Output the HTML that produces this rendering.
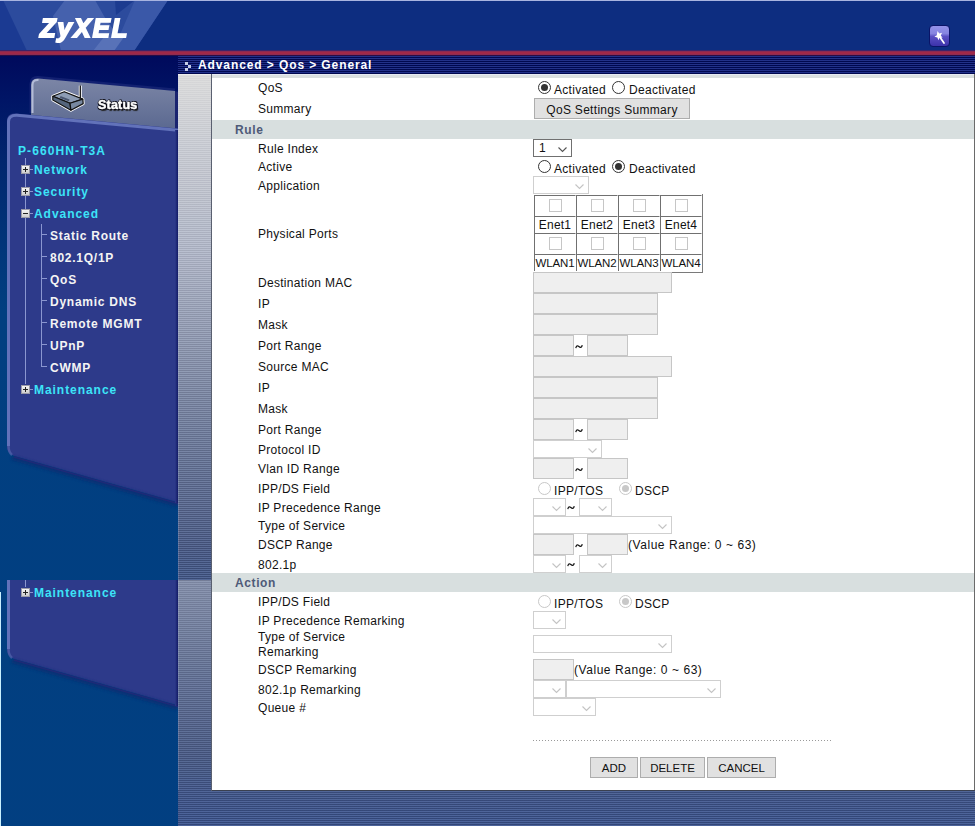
<!DOCTYPE html>
<html><head><meta charset="utf-8"><style>
*{box-sizing:content-box}
html,body{margin:0;padding:0;width:975px;height:826px;overflow:hidden;background:#023f85;font-family:"Liberation Sans",sans-serif}
.a{position:absolute}
.t{position:absolute;font-size:12px;line-height:14px;letter-spacing:0.3px;color:#111;white-space:nowrap}
.hd{position:absolute;font-size:12px;line-height:14px;letter-spacing:0.6px;color:#4e5a78;font-weight:bold;white-space:nowrap}
.mt{position:absolute;font-size:12px;line-height:14px;letter-spacing:0.6px;font-weight:bold;white-space:nowrap}
.rd{position:absolute;width:11px;height:11px;border:1px solid #333;border-radius:50%;background:#fff}
.rd i{position:absolute;left:2px;top:2px;width:7px;height:7px;border-radius:50%;background:#333}
.rd.dis{border-color:#c8c8c8}
.rd.dis i{background:#c8c8c8}
.sel{position:absolute;border:1px solid #707070;background:#fff}
.sel.dis{border-color:#cfcfcf}
.sel span{position:absolute;left:5px;top:1px;font-size:12px;line-height:14px;color:#111}
.inp{position:absolute;border:1px solid #c6c6c6;background:#efefef}
.btn{position:absolute;border:1px solid #adadad;background:#e1e1e1;text-align:center;font-size:11.5px;letter-spacing:0px;color:#111;white-space:nowrap}
.hdr{position:absolute;left:212px;width:762px;height:19px;background:#d8dfdf}
.ptab{position:absolute;left:533px;top:194px;width:168px;height:77px;border-right:1px solid #7a7a7a;border-bottom:1px solid #7a7a7a;padding:1px 0 0 1px}
.pr{display:flex}
.pc{position:relative;width:40px;border-left:1px solid #707070;border-top:1px solid #707070;border-right:1px solid #fff;border-bottom:0}
.pc.lab{font-size:12px;letter-spacing:0.2px;line-height:16px;text-align:center;color:#111;white-space:nowrap;overflow:visible}
.pc.lab.w{font-size:11.5px;letter-spacing:-0.1px}
.cb{position:absolute;left:14px;top:3px;width:11px;height:11px;border:1px solid #c6c6c6;background:#fff}
.pb{position:absolute;width:9px;height:9px;background:linear-gradient(#fafafa,#c8c8c8);box-shadow:inset 0 0 0 1px #9a9aa8}
.pb .h{position:absolute;left:2px;top:4px;width:5px;height:1px;background:#222}
.pb .v{position:absolute;left:4px;top:2px;width:1px;height:5px;background:#222}
.tl{position:absolute;width:1px;background:#8a96d0}
.th{position:absolute;height:1px;background:#8a96d0}
</style></head><body>
<!-- header -->
<div class="a" style="left:0;top:0;width:975px;height:51px;background:#0d2d80;overflow:hidden">
<svg width="975" height="51" style="position:absolute;left:0;top:0">
<polygon points="0,0 168,0 134,51 0,51" fill="#2c4b9d"/>
<polygon points="0,0 3,0 27,51 0,51" fill="#1b3a92"/>
<polygon points="65,0 95,0 104,16 128,51 61,51 53,16" fill="#4561ad"/>
<polygon points="115,0 135,0 116,15" fill="#1c3b90"/>
<polygon points="135,0 168,0 134,51 112,51 122,30" fill="#3a58a8"/>
<polygon points="93,51 114,51 124,37 104,37" fill="#5872b8"/>
<rect x="0" y="0" width="975" height="1" fill="#a8b4e0"/>
</svg>
<div class="a" style="left:40px;top:13px;font-size:25.5px;line-height:30px;font-weight:bold;font-style:italic;color:#fff;letter-spacing:2px;-webkit-text-stroke:1.9px #fff;will-change:transform">ZyXEL</div>
<div class="a" style="left:929px;top:25px;width:19px;height:20px;border:1px solid #0a1468;border-radius:4px;background:linear-gradient(#9292ea,#8684e0 38%,#5a50c4 52%,#3c32aa)">
<svg width="19" height="20" style="position:absolute;left:0;top:0"><path d="M7.5 5 L9.3 7.6 L12 6.8 L10.8 9.5 L12.6 11.8 L9.6 11.6 L8.4 14.2 L7.4 11.5 L4.4 10.8 L6.8 9.2 Z" fill="#fff"/><path d="M9.5 10.5 L14 17" stroke="#fff" stroke-width="1.7" stroke-linecap="round"/></svg>
</div>
</div>
<div class="a" style="left:0;top:50px;width:975px;height:1px;background:#3c2468"></div>
<div class="a" style="left:0;top:51px;width:975px;height:1px;background:#8a2a52"></div>
<div class="a" style="left:0;top:52px;width:975px;height:2px;background:#a02848"></div>
<div class="a" style="left:0;top:54px;width:975px;height:1px;background:#8c2c52"></div>
<div class="a" style="left:0;top:55px;width:975px;height:1px;background:#2a0c44"></div>
<!-- left frame 1 -->
<div class="a" style="left:0;top:56px;width:178px;height:524px;overflow:hidden"><div class="a" style="left:0;top:-56px;width:178px;height:826px"><div class="a" style="left:0;top:0;width:178px;height:826px;background:linear-gradient(to bottom,#000a5c 56px,#001566 100px,#01266e 160px,#01367a 250px,#013f80 310px,#023f82 826px)"></div>
<svg width="178" height="826" style="position:absolute;left:0;top:0">
<defs>
<linearGradient id="tabg" x1="0" y1="0" x2="0" y2="1"><stop offset="0" stop-color="#7c86a6"/><stop offset="1" stop-color="#5a6890"/></linearGradient>
<filter id="bl" x="-10%" y="-50%" width="120%" height="200%"><feGaussianBlur stdDeviation="1.5"/></filter>
<linearGradient id="rsh" x1="0" y1="0" x2="1" y2="0"><stop offset="0" stop-color="#2d3a8a"/><stop offset="1" stop-color="#121a66"/></linearGradient>
<linearGradient id="shd" x1="0" y1="0" x2="0" y2="1"><stop offset="0" stop-color="#023f82" stop-opacity="0"/><stop offset="1" stop-color="#0a2a70" stop-opacity="1"/></linearGradient>
</defs>
<path d="M175,90 L38,77.5 Q31,77 31,84 L31,113" fill="none" stroke="#1a2878" stroke-width="3" opacity="0.7"/>
<path d="M31,116 L31,85 Q31,78 38.5,78.5 L175,91 L175,130 Z" fill="url(#tabg)"/>
<path d="M32.5,113 L32.5,85 Q32.5,79.5 38.5,80" fill="none" stroke="#b4bcd8" stroke-width="2"/>
<path d="M175,91 L178,92 L178,130 L175,130 Z" fill="#1a2470"/>
<path d="M7,447 L7,121 Q7,112.5 16,113.5 L178,128.5 L178,502.5 L14,456 Q7,453 7,447 Z" fill="#2d3a8a"/>
<path d="M12,458 L178,505" stroke="#0c2a70" stroke-width="4" opacity="0.7" filter="url(#bl)"/><path d="M14,457 L178,503.5" stroke="#1e2a78" stroke-width="1.5"/>
<path d="M8.5,446 Q8.5,452 12,455" fill="none" stroke="#5a6cb4" stroke-width="2.5" opacity="0.6"/><path d="M8.5,446 L8.5,122 Q8.5,115 17,115.3 L178,130.3" fill="none" stroke="#6272ba" stroke-width="3"/>
<path d="M175,130 L178,130 L178,503 L175,503 Z" fill="url(#rsh)"/>
<!-- router icon -->
<g stroke-linejoin="round">
<path d="M52.8,96.3 L64.3,91.7 L82.8,99.1 L83.2,103.6 L70.9,110.2 L52.8,100 Z" fill="none" stroke="#fff" stroke-width="3"/>
<line x1="80.3" y1="85.6" x2="80.3" y2="98" stroke="#fff" stroke-width="3"/>
<path d="M52.8,96.3 L64.3,91.7 L82.8,99.1 L70,103.2 Z" fill="#8d9cb4" stroke="#111" stroke-width="1.2"/>
<path d="M52.8,96.3 L70,103.2 L70.9,110.2 L52.8,100 Z" fill="#55657c" stroke="#111" stroke-width="1.2"/>
<path d="M70,103.2 L82.8,99.1 L83.2,103.6 L70.9,110.2 Z" fill="#7888a0" stroke="#111" stroke-width="1.2"/>
<path d="M60.2,97 L69.2,100.4" stroke="#4a5670" stroke-width="2"/>
<line x1="80.3" y1="85.6" x2="80.3" y2="98" stroke="#111" stroke-width="1.3"/>
</g>
</svg>
<div class="a" style="left:98px;top:98px;font-size:12.5px;line-height:14px;font-weight:bold;color:#fff;letter-spacing:0.2px;-webkit-text-stroke:0.5px #fff;will-change:transform;text-shadow:1px 1px 0 #0a0a14,-1px 0 0 #0a0a14,0 -1px 0 #0a0a14,1px 0 0 #0a0a14,-1px 1px 0 #0a0a14,1px -1px 0 #0a0a14,1.5px 1.5px 1px #222">Status</div>
<div class="mt" style="left:18px;top:144px;color:#3ce4f8;letter-spacing:1.1px">P-660HN-T3A</div>
<div class="tl" style="left:25px;top:158px;height:226px"></div>
<div class="pb" style="left:21px;top:165px"><i class="h"></i><i class=v></i></div>
<div class="th" style="left:30px;top:169px;width:3px"></div>
<div class="mt" style="left:34px;top:163px;color:#3ce4f8;letter-spacing:0.95px">Network</div>
<div class="pb" style="left:21px;top:187px"><i class="h"></i><i class=v></i></div>
<div class="th" style="left:30px;top:191px;width:3px"></div>
<div class="mt" style="left:34px;top:185px;color:#3ce4f8;letter-spacing:0.95px">Security</div>
<div class="pb" style="left:21px;top:209px"><i class="h"></i></div>
<div class="th" style="left:30px;top:213px;width:3px"></div>
<div class="mt" style="left:34px;top:207px;color:#3ce4f8;letter-spacing:0.95px">Advanced</div>
<div class="pb" style="left:21px;top:385px"><i class="h"></i><i class=v></i></div>
<div class="th" style="left:30px;top:389px;width:3px"></div>
<div class="mt" style="left:34px;top:383px;color:#3ce4f8;letter-spacing:0.95px">Maintenance</div>
<div class="tl" style="left:41px;top:224px;height:143px"></div>
<div class="th" style="left:42px;top:234px;width:5px"></div>
<div class="mt" style="left:50px;top:229px;color:#f4f4f4;letter-spacing:0.75px">Static Route</div>
<div class="th" style="left:42px;top:256px;width:5px"></div>
<div class="mt" style="left:50px;top:251px;color:#f4f4f4;letter-spacing:0.75px">802.1Q/1P</div>
<div class="th" style="left:42px;top:278px;width:5px"></div>
<div class="mt" style="left:50px;top:273px;color:#f4f4f4;letter-spacing:0.75px">QoS</div>
<div class="th" style="left:42px;top:300px;width:5px"></div>
<div class="mt" style="left:50px;top:295px;color:#f4f4f4;letter-spacing:0.75px">Dynamic DNS</div>
<div class="th" style="left:42px;top:322px;width:5px"></div>
<div class="mt" style="left:50px;top:317px;color:#f4f4f4;letter-spacing:0.75px">Remote MGMT</div>
<div class="th" style="left:42px;top:344px;width:5px"></div>
<div class="mt" style="left:50px;top:339px;color:#f4f4f4;letter-spacing:0.75px">UPnP</div>
<div class="th" style="left:42px;top:366px;width:5px"></div>
<div class="mt" style="left:50px;top:361px;color:#f4f4f4;letter-spacing:0.75px">CWMP</div>
</div></div>
<div class="a" style="left:0;top:580px;width:178px;height:246px;overflow:hidden"><div class="a" style="left:0;top:-377px;width:178px;height:826px"><div class="a" style="left:0;top:0;width:178px;height:826px;background:linear-gradient(to bottom,#000a5c 56px,#001566 100px,#01266e 160px,#01367a 250px,#013f80 310px,#023f82 826px)"></div>
<svg width="178" height="826" style="position:absolute;left:0;top:0">
<defs>
<linearGradient id="tabg" x1="0" y1="0" x2="0" y2="1"><stop offset="0" stop-color="#7c86a6"/><stop offset="1" stop-color="#5a6890"/></linearGradient>
<filter id="bl" x="-10%" y="-50%" width="120%" height="200%"><feGaussianBlur stdDeviation="1.5"/></filter>
<linearGradient id="rsh" x1="0" y1="0" x2="1" y2="0"><stop offset="0" stop-color="#2d3a8a"/><stop offset="1" stop-color="#121a66"/></linearGradient>
<linearGradient id="shd" x1="0" y1="0" x2="0" y2="1"><stop offset="0" stop-color="#023f82" stop-opacity="0"/><stop offset="1" stop-color="#0a2a70" stop-opacity="1"/></linearGradient>
</defs>
<path d="M175,90 L38,77.5 Q31,77 31,84 L31,113" fill="none" stroke="#1a2878" stroke-width="3" opacity="0.7"/>
<path d="M31,116 L31,85 Q31,78 38.5,78.5 L175,91 L175,130 Z" fill="url(#tabg)"/>
<path d="M32.5,113 L32.5,85 Q32.5,79.5 38.5,80" fill="none" stroke="#b4bcd8" stroke-width="2"/>
<path d="M175,91 L178,92 L178,130 L175,130 Z" fill="#1a2470"/>
<path d="M7,447 L7,121 Q7,112.5 16,113.5 L178,128.5 L178,502.5 L14,456 Q7,453 7,447 Z" fill="#2d3a8a"/>
<path d="M12,458 L178,505" stroke="#0c2a70" stroke-width="4" opacity="0.7" filter="url(#bl)"/><path d="M14,457 L178,503.5" stroke="#1e2a78" stroke-width="1.5"/>
<path d="M8.5,446 Q8.5,452 12,455" fill="none" stroke="#5a6cb4" stroke-width="2.5" opacity="0.6"/><path d="M8.5,446 L8.5,122 Q8.5,115 17,115.3 L178,130.3" fill="none" stroke="#6272ba" stroke-width="3"/>
<path d="M175,130 L178,130 L178,503 L175,503 Z" fill="url(#rsh)"/>
<!-- router icon -->
<g stroke-linejoin="round">
<path d="M52.8,96.3 L64.3,91.7 L82.8,99.1 L83.2,103.6 L70.9,110.2 L52.8,100 Z" fill="none" stroke="#fff" stroke-width="3"/>
<line x1="80.3" y1="85.6" x2="80.3" y2="98" stroke="#fff" stroke-width="3"/>
<path d="M52.8,96.3 L64.3,91.7 L82.8,99.1 L70,103.2 Z" fill="#8d9cb4" stroke="#111" stroke-width="1.2"/>
<path d="M52.8,96.3 L70,103.2 L70.9,110.2 L52.8,100 Z" fill="#55657c" stroke="#111" stroke-width="1.2"/>
<path d="M70,103.2 L82.8,99.1 L83.2,103.6 L70.9,110.2 Z" fill="#7888a0" stroke="#111" stroke-width="1.2"/>
<path d="M60.2,97 L69.2,100.4" stroke="#4a5670" stroke-width="2"/>
<line x1="80.3" y1="85.6" x2="80.3" y2="98" stroke="#111" stroke-width="1.3"/>
</g>
</svg>
<div class="a" style="left:98px;top:98px;font-size:12.5px;line-height:14px;font-weight:bold;color:#fff;letter-spacing:0.2px;-webkit-text-stroke:0.5px #fff;will-change:transform;text-shadow:1px 1px 0 #0a0a14,-1px 0 0 #0a0a14,0 -1px 0 #0a0a14,1px 0 0 #0a0a14,-1px 1px 0 #0a0a14,1px -1px 0 #0a0a14,1.5px 1.5px 1px #222">Status</div>
<div class="mt" style="left:18px;top:144px;color:#3ce4f8;letter-spacing:1.1px">P-660HN-T3A</div>
<div class="tl" style="left:25px;top:158px;height:226px"></div>
<div class="pb" style="left:21px;top:165px"><i class="h"></i><i class=v></i></div>
<div class="th" style="left:30px;top:169px;width:3px"></div>
<div class="mt" style="left:34px;top:163px;color:#3ce4f8;letter-spacing:0.95px">Network</div>
<div class="pb" style="left:21px;top:187px"><i class="h"></i><i class=v></i></div>
<div class="th" style="left:30px;top:191px;width:3px"></div>
<div class="mt" style="left:34px;top:185px;color:#3ce4f8;letter-spacing:0.95px">Security</div>
<div class="pb" style="left:21px;top:209px"><i class="h"></i></div>
<div class="th" style="left:30px;top:213px;width:3px"></div>
<div class="mt" style="left:34px;top:207px;color:#3ce4f8;letter-spacing:0.95px">Advanced</div>
<div class="pb" style="left:21px;top:385px"><i class="h"></i><i class=v></i></div>
<div class="th" style="left:30px;top:389px;width:3px"></div>
<div class="mt" style="left:34px;top:383px;color:#3ce4f8;letter-spacing:0.95px">Maintenance</div>
<div class="tl" style="left:41px;top:224px;height:143px"></div>
<div class="th" style="left:42px;top:234px;width:5px"></div>
<div class="mt" style="left:50px;top:229px;color:#f4f4f4;letter-spacing:0.75px">Static Route</div>
<div class="th" style="left:42px;top:256px;width:5px"></div>
<div class="mt" style="left:50px;top:251px;color:#f4f4f4;letter-spacing:0.75px">802.1Q/1P</div>
<div class="th" style="left:42px;top:278px;width:5px"></div>
<div class="mt" style="left:50px;top:273px;color:#f4f4f4;letter-spacing:0.75px">QoS</div>
<div class="th" style="left:42px;top:300px;width:5px"></div>
<div class="mt" style="left:50px;top:295px;color:#f4f4f4;letter-spacing:0.75px">Dynamic DNS</div>
<div class="th" style="left:42px;top:322px;width:5px"></div>
<div class="mt" style="left:50px;top:317px;color:#f4f4f4;letter-spacing:0.75px">Remote MGMT</div>
<div class="th" style="left:42px;top:344px;width:5px"></div>
<div class="mt" style="left:50px;top:339px;color:#f4f4f4;letter-spacing:0.75px">UPnP</div>
<div class="th" style="left:42px;top:366px;width:5px"></div>
<div class="mt" style="left:50px;top:361px;color:#f4f4f4;letter-spacing:0.75px">CWMP</div>
</div></div>
<div class="a" style="left:0;top:592px;width:1px;height:234px;background:#c8f0ff"></div>
<!-- title bar -->
<div class="a" style="left:178px;top:56px;width:797px;height:18px;background:repeating-linear-gradient(to bottom,#22318a 0 1px,#000850 1px 2px)">
<svg width="10" height="12" style="position:absolute;left:7px;top:6px"><rect x="0" y="0" width="3" height="3" fill="#c4cce6"/><rect x="3" y="3" width="3" height="3" fill="#c4cce6"/><rect x="0" y="6" width="3" height="3" fill="#c4cce6"/></svg>
<div class="a" style="left:20px;top:2px;font-size:12px;line-height:14px;font-weight:bold;color:#fff;letter-spacing:0.9px;white-space:nowrap">Advanced &gt; Qos &gt; General</div>
</div>
<!-- main bg -->
<div class="a" style="left:178px;top:74px;width:797px;height:506px;background:linear-gradient(to bottom,#dedede 0px,#d9dadc 25px,#d3d5da 50px,#ced1d8 75px,#c9ccd5 100px,#c4c8d3 125px,#bec4d1 150px,#b9bfcf 175px,#b0b7c9 200px,#a7afc3 225px,#9ea7bd 250px,#959fb7 275px,#8c97b1 300px,#838fab 325px,#7b88a7 350px,#7381a2 375px,#6a799d 400px,#627299 425px,#5a6b94 450px,#51638f 475px,#4b6091 500px,#4a5f91 506px)"></div>
<div class="a" style="left:178px;top:580px;width:797px;height:246px;background:linear-gradient(to bottom,#8b96b1 0px,#828eab 25px,#7a87a6 50px,#7280a1 75px,#69789d 100px,#617198 125px,#596a93 150px,#51638f 175px,#4a6091 200px,#445c93 225px,#405a94 246px)"></div>
<div class="a" style="left:178px;top:74px;width:797px;height:752px;background:repeating-linear-gradient(to bottom,rgba(0,0,20,0.22) 0 1px,rgba(255,255,255,0.06) 1px 2px);-webkit-mask-image:linear-gradient(to bottom,rgba(0,0,0,0.12) 0px,rgba(0,0,0,0.45) 176px,rgba(0,0,0,0.8) 400px,rgba(0,0,0,1) 506px,rgba(0,0,0,0.5) 507px,rgba(0,0,0,1) 752px)"></div>
<!-- content -->
<div class="a" style="left:178px;top:74px;width:1px;height:716px;background:rgba(200,215,255,0.18)"></div>
<div class="a" style="left:178px;top:74px;width:33px;height:1px;background:rgba(255,255,255,0.55)"></div>
<div class="a" style="left:211px;top:74px;width:1px;height:717px;background:#5a6070"></div>
<div class="a" style="left:212px;top:74px;width:762px;height:716px;background:#fff"></div>
<div class="a" style="left:974px;top:74px;width:1px;height:717px;background:#6a6a6a"></div>
<div class="a" style="left:212px;top:790px;width:763px;height:1px;background:#3a4050"></div>
<div style="position:absolute;left:212px;top:74px;width:762px;height:1px;background:#e6eaf2"></div>
<div style="position:absolute;left:212px;top:75px;width:762px;height:3px;background:#dadfe0"></div>
<div class="t" style="left:258px;top:81px;">QoS</div>
<div class="rd" style="left:538px;top:81px"><i></i></div>
<div class="t" style="left:554px;top:83px;">Activated</div>
<div class="rd" style="left:612px;top:81px"></div>
<div class="t" style="left:629px;top:83px;">Deactivated</div>
<div class="t" style="left:258px;top:102px;">Summary</div>
<div class="btn" style="left:534px;top:98px;width:154px;height:17px;padding-top:2px;line-height:19px"><span style="font-size:12px;letter-spacing:0.3px">QoS Settings Summary</span></div>
<div class="hdr" style="top:120px"></div>
<div class="hd" style="left:235px;top:123px;">Rule</div>
<div class="t" style="left:258px;top:142px;">Rule Index</div>
<div class="sel" style="left:533px;top:139px;width:37px;height:16px"><span>1</span><svg width="9" height="6" style="position:absolute;right:4px;top:7px"><path d="M0.5 0.5 L4.5 4.5 L8.5 0.5" fill="none" stroke="#555" stroke-width="1.1"/></svg></div>
<div class="t" style="left:258px;top:160px;">Active</div>
<div class="rd" style="left:538px;top:160px"></div>
<div class="t" style="left:554px;top:162px;">Activated</div>
<div class="rd" style="left:612px;top:160px"><i></i></div>
<div class="t" style="left:629px;top:162px;">Deactivated</div>
<div class="t" style="left:258px;top:179px;">Application</div>
<div class="sel dis" style="left:533px;top:176px;width:54px;height:16px"><svg width="9" height="6" style="position:absolute;right:4px;top:7px"><path d="M0.5 0.5 L4.5 4.5 L8.5 0.5" fill="none" stroke="#c4c4c4" stroke-width="1.1"/></svg></div>
<div class="t" style="left:258px;top:227px;">Physical Ports</div>
<div class="ptab"><div class="pr" style="height:21px"><div class="pc"><b class="cb"></b></div><div class="pc"><b class="cb"></b></div><div class="pc"><b class="cb"></b></div><div class="pc"><b class="cb"></b></div></div><div class="pr" style="height:17px"><div class="pc lab">Enet1</div><div class="pc lab">Enet2</div><div class="pc lab">Enet3</div><div class="pc lab">Enet4</div></div><div class="pr" style="height:21px"><div class="pc"><b class="cb"></b></div><div class="pc"><b class="cb"></b></div><div class="pc"><b class="cb"></b></div><div class="pc"><b class="cb"></b></div></div><div class="pr" style="height:17px"><div class="pc lab w">WLAN1</div><div class="pc lab w">WLAN2</div><div class="pc lab w">WLAN3</div><div class="pc lab w">WLAN4</div></div></div>
<div class="t" style="left:258px;top:276px;">Destination MAC</div>
<div class="inp" style="left:533px;top:272px;width:137px;height:19px"></div>
<div class="t" style="left:258px;top:297px;">IP</div>
<div class="inp" style="left:533px;top:293px;width:123px;height:19px"></div>
<div class="t" style="left:258px;top:318px;">Mask</div>
<div class="inp" style="left:533px;top:314px;width:123px;height:19px"></div>
<div class="t" style="left:258px;top:339px;">Port Range</div>
<div class="inp" style="left:533px;top:335px;width:39px;height:19px"></div>
<svg width="9" height="6" style="position:absolute;left:575px;top:344px"><path d="M0.8,4.2 Q1.6,1 3.5,2.2 Q5.2,3.6 6.2,3.2 Q7,2.8 7.2,1.2" fill="none" stroke="#111" stroke-width="1.25"/></svg>
<div class="inp" style="left:587px;top:335px;width:39px;height:19px"></div>
<div class="t" style="left:258px;top:360px;">Source MAC</div>
<div class="inp" style="left:533px;top:356px;width:137px;height:19px"></div>
<div class="t" style="left:258px;top:381px;">IP</div>
<div class="inp" style="left:533px;top:377px;width:123px;height:19px"></div>
<div class="t" style="left:258px;top:402px;">Mask</div>
<div class="inp" style="left:533px;top:398px;width:123px;height:19px"></div>
<div class="t" style="left:258px;top:423px;">Port Range</div>
<div class="inp" style="left:533px;top:419px;width:39px;height:19px"></div>
<svg width="9" height="6" style="position:absolute;left:575px;top:428px"><path d="M0.8,4.2 Q1.6,1 3.5,2.2 Q5.2,3.6 6.2,3.2 Q7,2.8 7.2,1.2" fill="none" stroke="#111" stroke-width="1.25"/></svg>
<div class="inp" style="left:587px;top:419px;width:39px;height:19px"></div>
<div class="t" style="left:258px;top:443px;">Protocol ID</div>
<div class="sel dis" style="left:533px;top:440px;width:67px;height:16px"><svg width="9" height="6" style="position:absolute;right:4px;top:7px"><path d="M0.5 0.5 L4.5 4.5 L8.5 0.5" fill="none" stroke="#c4c4c4" stroke-width="1.1"/></svg></div>
<div class="t" style="left:258px;top:462px;">Vlan ID Range</div>
<div class="inp" style="left:533px;top:458px;width:39px;height:19px"></div>
<svg width="9" height="6" style="position:absolute;left:575px;top:467px"><path d="M0.8,4.2 Q1.6,1 3.5,2.2 Q5.2,3.6 6.2,3.2 Q7,2.8 7.2,1.2" fill="none" stroke="#111" stroke-width="1.25"/></svg>
<div class="inp" style="left:587px;top:458px;width:39px;height:19px"></div>
<div class="t" style="left:258px;top:482px;">IPP/DS Field</div>
<div class="rd dis" style="left:538px;top:482px"></div>
<div class="t" style="left:554px;top:484px;">IPP/TOS</div>
<div class="rd dis" style="left:619px;top:482px"><i></i></div>
<div class="t" style="left:635px;top:484px;">DSCP</div>
<div class="t" style="left:258px;top:501px;">IP Precedence Range</div>
<div class="sel dis" style="left:533px;top:498px;width:31px;height:16px"><svg width="9" height="6" style="position:absolute;right:4px;top:7px"><path d="M0.5 0.5 L4.5 4.5 L8.5 0.5" fill="none" stroke="#c4c4c4" stroke-width="1.1"/></svg></div>
<svg width="9" height="6" style="position:absolute;left:567px;top:505px"><path d="M0.8,4.2 Q1.6,1 3.5,2.2 Q5.2,3.6 6.2,3.2 Q7,2.8 7.2,1.2" fill="none" stroke="#111" stroke-width="1.25"/></svg>
<div class="sel dis" style="left:579px;top:498px;width:31px;height:16px"><svg width="9" height="6" style="position:absolute;right:4px;top:7px"><path d="M0.5 0.5 L4.5 4.5 L8.5 0.5" fill="none" stroke="#c4c4c4" stroke-width="1.1"/></svg></div>
<div class="t" style="left:258px;top:519px;">Type of Service</div>
<div class="sel dis" style="left:533px;top:516px;width:137px;height:16px"><svg width="9" height="6" style="position:absolute;right:4px;top:7px"><path d="M0.5 0.5 L4.5 4.5 L8.5 0.5" fill="none" stroke="#c4c4c4" stroke-width="1.1"/></svg></div>
<div class="t" style="left:258px;top:538px;">DSCP Range</div>
<div class="inp" style="left:533px;top:534px;width:39px;height:19px"></div>
<svg width="9" height="6" style="position:absolute;left:575px;top:543px"><path d="M0.8,4.2 Q1.6,1 3.5,2.2 Q5.2,3.6 6.2,3.2 Q7,2.8 7.2,1.2" fill="none" stroke="#111" stroke-width="1.25"/></svg>
<div class="inp" style="left:587px;top:534px;width:39px;height:19px"></div>
<div class="t" style="left:628px;top:538px;letter-spacing:0.55px">(Value Range: 0 ~ 63)</div>
<div class="t" style="left:258px;top:558px;">802.1p</div>
<div class="sel dis" style="left:533px;top:555px;width:31px;height:16px"><svg width="9" height="6" style="position:absolute;right:4px;top:7px"><path d="M0.5 0.5 L4.5 4.5 L8.5 0.5" fill="none" stroke="#c4c4c4" stroke-width="1.1"/></svg></div>
<svg width="9" height="6" style="position:absolute;left:567px;top:562px"><path d="M0.8,4.2 Q1.6,1 3.5,2.2 Q5.2,3.6 6.2,3.2 Q7,2.8 7.2,1.2" fill="none" stroke="#111" stroke-width="1.25"/></svg>
<div class="sel dis" style="left:579px;top:555px;width:31px;height:16px"><svg width="9" height="6" style="position:absolute;right:4px;top:7px"><path d="M0.5 0.5 L4.5 4.5 L8.5 0.5" fill="none" stroke="#c4c4c4" stroke-width="1.1"/></svg></div>
<div class="hdr" style="top:573px"></div>
<div class="hd" style="left:235px;top:576px;">Action</div>
<div class="t" style="left:258px;top:595px;">IPP/DS Field</div>
<div class="rd dis" style="left:538px;top:595px"></div>
<div class="t" style="left:554px;top:597px;">IPP/TOS</div>
<div class="rd dis" style="left:619px;top:595px"><i></i></div>
<div class="t" style="left:635px;top:597px;">DSCP</div>
<div class="t" style="left:258px;top:614px;">IP Precedence Remarking</div>
<div class="sel dis" style="left:533px;top:611px;width:31px;height:16px"><svg width="9" height="6" style="position:absolute;right:4px;top:7px"><path d="M0.5 0.5 L4.5 4.5 L8.5 0.5" fill="none" stroke="#c4c4c4" stroke-width="1.1"/></svg></div>
<div class="t" style="left:258px;top:630px;">Type of Service</div>
<div class="t" style="left:258px;top:645px;">Remarking</div>
<div class="sel dis" style="left:533px;top:635px;width:137px;height:16px"><svg width="9" height="6" style="position:absolute;right:4px;top:7px"><path d="M0.5 0.5 L4.5 4.5 L8.5 0.5" fill="none" stroke="#c4c4c4" stroke-width="1.1"/></svg></div>
<div class="t" style="left:258px;top:663px;">DSCP Remarking</div>
<div class="inp" style="left:533px;top:659px;width:39px;height:19px"></div>
<div class="t" style="left:574px;top:663px;letter-spacing:0.55px">(Value Range: 0 ~ 63)</div>
<div class="t" style="left:258px;top:683px;">802.1p Remarking</div>
<div class="sel dis" style="left:533px;top:680px;width:31px;height:16px"><svg width="9" height="6" style="position:absolute;right:4px;top:7px"><path d="M0.5 0.5 L4.5 4.5 L8.5 0.5" fill="none" stroke="#c4c4c4" stroke-width="1.1"/></svg></div>
<div class="sel dis" style="left:566px;top:680px;width:153px;height:16px"><svg width="9" height="6" style="position:absolute;right:4px;top:7px"><path d="M0.5 0.5 L4.5 4.5 L8.5 0.5" fill="none" stroke="#c4c4c4" stroke-width="1.1"/></svg></div>
<div class="t" style="left:258px;top:701px;">Queue #</div>
<div class="sel dis" style="left:533px;top:698px;width:61px;height:16px"><svg width="9" height="6" style="position:absolute;right:4px;top:7px"><path d="M0.5 0.5 L4.5 4.5 L8.5 0.5" fill="none" stroke="#c4c4c4" stroke-width="1.1"/></svg></div>
<div style="position:absolute;left:533px;top:740px;width:298px;height:1px;background-image:repeating-linear-gradient(to right,#9a9a9a 0 1px,transparent 1px 3px)"></div>
<div class="btn" style="left:590px;top:757px;width:46px;height:18px;padding-top:1px;line-height:19px">ADD</div>
<div class="btn" style="left:640px;top:757px;width:63px;height:18px;padding-top:1px;line-height:19px">DELETE</div>
<div class="btn" style="left:707px;top:757px;width:67px;height:18px;padding-top:1px;line-height:19px">CANCEL</div>
</body></html>
